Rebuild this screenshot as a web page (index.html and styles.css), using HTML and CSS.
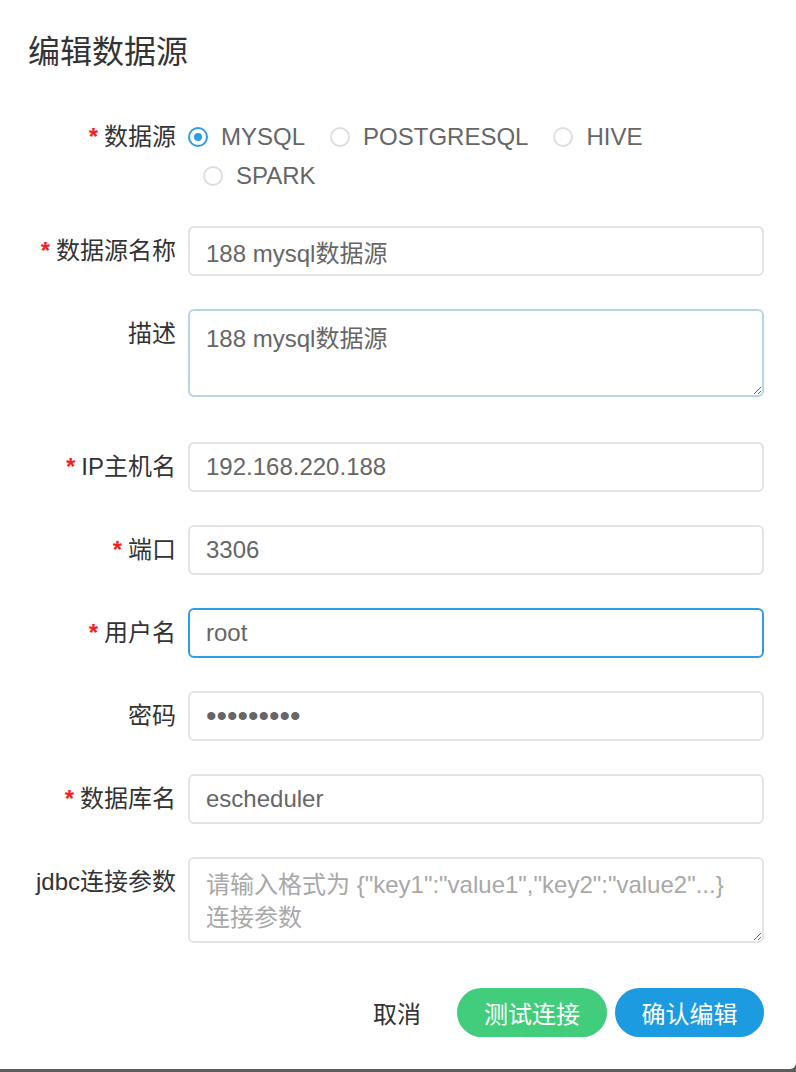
FILE: index.html
```html
<!DOCTYPE html>
<html lang="zh-CN">
<head>
  <meta charset="UTF-8">
  <meta name="viewport" content="width=device-width, initial-scale=1.0">
  <title>编辑数据源</title>
  <link rel="stylesheet" href="styles.css">
</head>
<body>
  <div class="dialog">
    <h1 class="dialog-title">编辑数据源</h1>

    <div class="form-item form-item-radio">
      <label class="form-label required">数据源</label>
      <div class="radio-group">
        <span class="radio-item checked"><span class="radio-dot"></span>MYSQL</span>
        <span class="radio-item"><span class="radio-dot"></span>POSTGRESQL</span>
        <span class="radio-item"><span class="radio-dot"></span>HIVE</span>
        <span class="radio-item"><span class="radio-dot"></span>SPARK</span>
      </div>
    </div>

    <div class="form-item">
      <label class="form-label required" for="name">数据源名称</label>
      <input class="form-input" type="text" id="name" value="188 mysql数据源">
    </div>

    <div class="form-item form-item-area">
      <label class="form-label" for="note">描述</label>
      <textarea class="form-input form-textarea hover" id="note">188 mysql数据源</textarea>
    </div>

    <div class="form-item">
      <label class="form-label required" for="host">IP主机名</label>
      <input class="form-input" type="text" id="host" value="192.168.220.188">
    </div>

    <div class="form-item">
      <label class="form-label required" for="port">端口</label>
      <input class="form-input" type="text" id="port" value="3306">
    </div>

    <div class="form-item">
      <label class="form-label required" for="user">用户名</label>
      <input class="form-input focus" type="text" id="user" value="root">
    </div>

    <div class="form-item">
      <label class="form-label" for="password">密码</label>
      <input class="form-input password" type="password" id="password" value="123456789">
    </div>

    <div class="form-item">
      <label class="form-label required" for="database">数据库名</label>
      <input class="form-input" type="text" id="database" value="escheduler">
    </div>

    <div class="form-item form-item-area">
      <label class="form-label" for="other">jdbc连接参数</label>
      <textarea class="form-input form-textarea params" id="other" placeholder="请输入格式为 {&quot;key1&quot;:&quot;value1&quot;,&quot;key2&quot;:&quot;value2&quot;...}&#10;连接参数"></textarea>
    </div>

    <div class="dialog-footer">
      <button class="btn btn-text">取消</button>
      <button class="btn btn-success">测试连接</button>
      <button class="btn btn-primary">确认编辑</button>
    </div>
  </div>
</body>
</html>
```

FILE: styles.css
```css
html, body {
  margin: 0;
  padding: 0;
}
body {
  background-color: #5c5c5c;
  font-family: 'Liberation Sans', 'Noto Sans CJK SC', sans-serif;
  color: #333;
}
.dialog {
  box-sizing: border-box;
  width: 796px;
  height: 1069px;
  background: #fff;
  padding: 32px 32px 0 28px;
  border-radius: 0 0 6px 0;
}
.dialog-title {
  margin: 0 0 45px;
  font-size: 32px;
  line-height: 40px;
  font-weight: 400;
  color: #333;
}
.form-item {
  display: flex;
  align-items: flex-start;
  margin-bottom: 33px;
}
.form-item-area {
  margin-bottom: 45px;
}
.form-item-radio {
  margin-bottom: 31px;
}
.form-label {
  box-sizing: border-box;
  flex: 0 0 160px;
  padding-right: 12px;
  text-align: right;
  font-size: 24px;
  line-height: 50px;
  color: #333;
  white-space: nowrap;
}
.form-item-radio .form-label {
  line-height: 39px;
}
.required::before {
  content: '*';
  color: #f51e1e;
  font-weight: 700;
  margin-right: 6px;
}
.radio-group {
  flex: 1;
  display: flex;
  flex-wrap: wrap;
  padding-left: 15px;
}
.radio-item {
  display: inline-flex;
  align-items: center;
  height: 39px;
  margin-right: 25px;
  font-size: 24px;
  color: #666;
}
.radio-item:first-child {
  margin-left: -15px;
}
.radio-dot {
  box-sizing: border-box;
  width: 20px;
  height: 20px;
  margin-right: 13px;
  border: 2px solid #dedede;
  border-radius: 50%;
  position: relative;
}
.radio-item.checked .radio-dot {
  border-color: #2d9fe0;
}
.radio-item.checked .radio-dot::after {
  content: '';
  position: absolute;
  left: 4px;
  top: 4px;
  width: 8px;
  height: 8px;
  border-radius: 50%;
  background: #2d9fe0;
}
.form-input {
  box-sizing: border-box;
  flex: 1;
  height: 50px;
  margin: 0;
  padding: 0 16px;
  border: 2px solid #e3e3e3;
  border-radius: 6px;
  font-family: inherit;
  font-size: 24px;
  color: #666;
  background: #fff;
  outline: none;
}
.form-input.focus {
  border-color: #2d9fe0;
}
.form-input.password {
  letter-spacing: 0;
  font-size: 30px;
}
.form-textarea {
  height: 88px;
  padding: 11px 16px 9px;
  line-height: 33px;
  resize: both;
}
.form-textarea.hover {
  border-color: #b5d5e3;
}
.form-textarea.params {
  height: 86px;
  padding-top: 9px;
}
.form-textarea::placeholder {
  color: #a8a8a8;
}
.dialog-footer {
  display: flex;
  justify-content: flex-end;
  align-items: center;
  gap: 8px;
}
.btn {
  height: 49px;
  padding: 0;
  border: none;
  border-radius: 25px;
  font-family: inherit;
  font-size: 24px;
  cursor: pointer;
}
.btn-text {
  background: transparent;
  color: #333;
  padding: 0 18px;
  margin-right: 10px;
}
.btn-success {
  width: 150px;
  background-color: #42cd7c;
  color: #fff;
}
.btn-primary {
  width: 149px;
  background-color: #1d9be0;
  color: #fff;
}
```
